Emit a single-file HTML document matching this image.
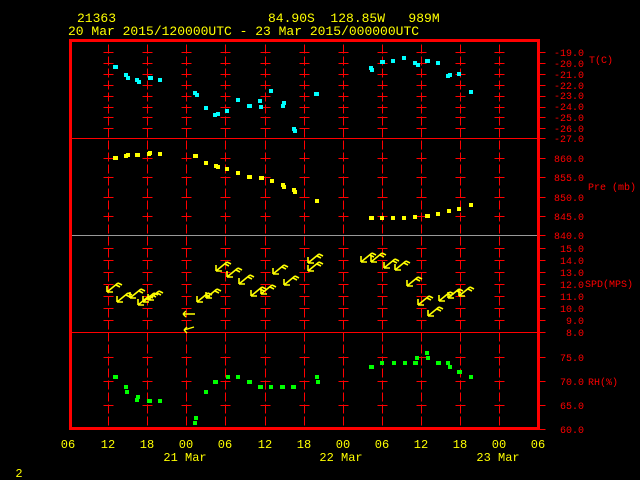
<!DOCTYPE html>
<html><head><meta charset="utf-8"><style>
html,body{margin:0;padding:0;background:#000;width:640px;height:480px;overflow:hidden}
svg{display:block}
text{font-family:"Liberation Mono",monospace}
</style></head><body>
<svg width="640" height="480" viewBox="0 0 640 480" xmlns="http://www.w3.org/2000/svg">
<defs>
<g id="col" stroke="#f00" stroke-width="1">
<line x1="0" y1="44" x2="0" y2="427" stroke-dasharray="9,3"/>
<path d="M-5 52h10M-5 63h10M-5 74h10M-5 85h10M-5 96h10M-5 107h10M-5 117h10M-5 128h10M-5 158h10M-5 177h10M-5 197h10M-5 216h10M-5 248h10M-5 260h10M-5 272h10M-5 284h10M-5 296h10M-5 308h10M-5 320h10M-5 357h10M-5 381h10M-5 405h10"/>
</g>
<g id="arr" stroke="#ff0" stroke-width="1.6" fill="none">
<path d="M0 0 L11 -9 M0 0 L0 -6 M0 0 L6 0 M11 -9 L15 -7 M9 -7 L13 -5"/>
</g>
</defs>
<rect width="640" height="480" fill="#000"/>
<text x="77" y="22" fill="#ff0" font-size="13">21363</text>
<text x="268" y="22" fill="#ff0" font-size="13" xml:space="preserve">84.90S  128.85W   989M</text>
<text x="68" y="35" fill="#ff0" font-size="13">20 Mar 2015/120000UTC - 23 Mar 2015/000000UTC</text>
<g transform="translate(0.5,0.5)" shape-rendering="crispEdges">
<use href="#col" x="108"/><use href="#col" x="147"/><use href="#col" x="186"/><use href="#col" x="225"/><use href="#col" x="265"/><use href="#col" x="304"/><use href="#col" x="343"/><use href="#col" x="382"/><use href="#col" x="421"/><use href="#col" x="460"/><use href="#col" x="499"/>
<line x1="71" y1="138" x2="538" y2="138" stroke="#f00"/>
<line x1="71" y1="235" x2="538" y2="235" stroke="#999"/>
<line x1="71" y1="332" x2="538" y2="332" stroke="#f00"/>
<path stroke="#f00" d="M538 52h7M538 63h7M538 74h7M538 85h7M538 96h7M538 107h7M538 117h7M538 128h7M538 138h7M538 158h7M538 177h7M538 197h7M538 216h7M538 235h7M538 248h7M538 260h7M538 272h7M538 284h7M538 296h7M538 308h7M538 320h7M538 332h7M538 357h7M538 381h7M538 405h7M538 429h7"/>
</g>
<rect x="70.5" y="40.5" width="468" height="388" fill="none" stroke="#f00" stroke-width="3" shape-rendering="crispEdges"/>
<g fill="#f00" font-size="10" text-anchor="end">
<text x="584" y="56">-19.0</text><text x="584" y="67">-20.0</text><text x="584" y="78">-21.0</text><text x="584" y="89">-22.0</text><text x="584" y="99">-23.0</text><text x="584" y="110">-24.0</text><text x="584" y="121">-25.0</text><text x="584" y="132">-26.0</text><text x="584" y="142">-27.0</text>
<text x="584" y="162">860.0</text><text x="584" y="181">855.0</text><text x="584" y="201">850.0</text><text x="584" y="220">845.0</text><text x="584" y="239">840.0</text>
<text x="584" y="252">15.0</text><text x="584" y="264">14.0</text><text x="584" y="276">13.0</text><text x="584" y="288">12.0</text><text x="584" y="300">11.0</text><text x="584" y="312">10.0</text><text x="584" y="324">9.0</text><text x="584" y="336">8.0</text>
<text x="584" y="361">75.0</text><text x="584" y="385">70.0</text><text x="584" y="409">65.0</text><text x="584" y="433">60.0</text>
</g>
<g fill="#f00" font-size="10">
<text x="589" y="63">T(C)</text><text x="588" y="190">Pre (mb)</text><text x="585" y="287">SPD(MPS)</text><text x="588" y="385">RH(%)</text>
</g>
<g fill="#0ff" shape-rendering="crispEdges">
<rect x="113" y="65" width="5" height="4"/><rect x="124" y="73" width="4" height="4"/><rect x="126" y="76" width="4" height="4"/><rect x="135" y="78" width="4" height="4"/><rect x="137" y="80" width="4" height="4"/><rect x="148" y="76" width="5" height="4"/><rect x="158" y="78" width="4" height="4"/><rect x="193" y="91" width="4" height="4"/><rect x="195" y="93" width="4" height="4"/><rect x="204" y="106" width="4" height="4"/><rect x="213" y="113" width="4" height="4"/><rect x="216" y="112" width="4" height="4"/><rect x="225" y="109" width="4" height="4"/><rect x="236" y="98" width="4" height="4"/><rect x="247" y="104" width="5" height="4"/><rect x="258" y="99" width="4" height="4"/><rect x="259" y="105" width="4" height="4"/><rect x="269" y="89" width="4" height="4"/><rect x="281" y="104" width="4" height="4"/><rect x="282" y="101" width="4" height="4"/><rect x="292" y="127" width="4" height="4"/><rect x="293" y="129" width="4" height="4"/><rect x="314" y="92" width="5" height="4"/>
<rect x="369" y="66" width="4" height="4"/><rect x="370" y="68" width="4" height="4"/><rect x="380" y="60" width="5" height="4"/><rect x="391" y="59" width="4" height="4"/><rect x="402" y="56" width="4" height="4"/><rect x="413" y="61" width="4" height="4"/><rect x="416" y="63" width="4" height="4"/><rect x="425" y="59" width="5" height="4"/><rect x="436" y="61" width="4" height="4"/><rect x="446" y="74" width="4" height="4"/><rect x="448" y="73" width="4" height="4"/><rect x="457" y="72" width="4" height="4"/><rect x="469" y="90" width="4" height="4"/>
</g>
<g fill="#ff0" shape-rendering="crispEdges">
<rect x="113" y="156" width="5" height="4"/><rect x="124" y="154" width="4" height="4"/><rect x="126" y="153" width="4" height="4"/><rect x="135" y="153" width="5" height="4"/><rect x="147" y="152" width="4" height="4"/><rect x="148" y="151" width="4" height="4"/><rect x="158" y="152" width="4" height="4"/><rect x="193" y="154" width="5" height="4"/><rect x="204" y="161" width="4" height="4"/><rect x="214" y="164" width="4" height="4"/><rect x="216" y="165" width="4" height="4"/><rect x="225" y="167" width="4" height="4"/><rect x="236" y="171" width="4" height="4"/><rect x="247" y="175" width="5" height="4"/><rect x="259" y="176" width="5" height="4"/><rect x="270" y="179" width="4" height="4"/><rect x="281" y="183" width="4" height="4"/><rect x="282" y="185" width="4" height="4"/><rect x="292" y="188" width="4" height="4"/><rect x="293" y="190" width="4" height="4"/><rect x="315" y="199" width="4" height="4"/>
<rect x="369" y="216" width="5" height="4"/><rect x="380" y="216" width="4" height="4"/><rect x="391" y="216" width="4" height="4"/><rect x="402" y="216" width="4" height="4"/><rect x="413" y="215" width="4" height="4"/><rect x="425" y="214" width="5" height="4"/><rect x="436" y="212" width="4" height="4"/><rect x="447" y="209" width="4" height="4"/><rect x="457" y="207" width="4" height="4"/><rect x="469" y="203" width="4" height="4"/>
</g>
<g>
<use href="#arr" x="107" y="292"/><use href="#arr" x="117" y="302"/><use href="#arr" x="130" y="298"/><use href="#arr" x="138" y="305"/><use href="#arr" x="143" y="302"/><use href="#arr" x="148" y="300"/>
<use href="#arr" x="197" y="302"/><use href="#arr" x="206" y="298"/>
<use href="#arr" x="216" y="271"/><use href="#arr" x="227" y="277"/><use href="#arr" x="239" y="284"/><use href="#arr" x="251" y="296"/><use href="#arr" x="261" y="294"/><use href="#arr" x="273" y="274"/><use href="#arr" x="284" y="285"/><use href="#arr" x="308" y="263"/><use href="#arr" x="308" y="271"/>
<use href="#arr" x="361" y="262"/><use href="#arr" x="371" y="262"/><use href="#arr" x="384" y="268"/><use href="#arr" x="395" y="270"/><use href="#arr" x="407" y="286"/><use href="#arr" x="418" y="305"/><use href="#arr" x="428" y="316"/><use href="#arr" x="439" y="301"/><use href="#arr" x="448" y="298"/><use href="#arr" x="459" y="296"/>
<path stroke="#ff0" stroke-width="1.4" fill="none" d="M183 314h12M183 314l3 -3M183 314l3 3M184 330l10 -3M184 330l3 -3M184 330l3 3"/>
</g>
<g fill="#0f0" shape-rendering="crispEdges">
<rect x="113" y="375" width="5" height="4"/><rect x="124" y="385" width="4" height="4"/><rect x="125" y="390" width="4" height="4"/><rect x="135" y="398" width="4" height="4"/><rect x="136" y="395" width="4" height="4"/><rect x="147" y="399" width="5" height="4"/><rect x="158" y="399" width="4" height="4"/><rect x="194" y="416" width="4" height="4"/><rect x="193" y="421" width="4" height="4"/><rect x="204" y="390" width="4" height="4"/><rect x="213" y="380" width="5" height="4"/><rect x="226" y="375" width="4" height="4"/><rect x="236" y="375" width="4" height="4"/><rect x="247" y="380" width="5" height="4"/><rect x="258" y="385" width="5" height="4"/><rect x="269" y="385" width="4" height="4"/><rect x="280" y="385" width="5" height="4"/><rect x="291" y="385" width="5" height="4"/><rect x="315" y="375" width="4" height="4"/><rect x="316" y="380" width="4" height="4"/>
<rect x="369" y="365" width="5" height="4"/><rect x="380" y="361" width="4" height="4"/><rect x="392" y="361" width="4" height="4"/><rect x="403" y="361" width="4" height="4"/><rect x="413" y="361" width="5" height="4"/><rect x="415" y="356" width="4" height="4"/><rect x="425" y="351" width="4" height="4"/><rect x="426" y="356" width="4" height="4"/><rect x="436" y="361" width="5" height="4"/><rect x="446" y="361" width="4" height="4"/><rect x="448" y="365" width="4" height="4"/><rect x="457" y="370" width="5" height="4"/><rect x="469" y="375" width="4" height="4"/>
</g>
<g fill="#ff0" font-size="12" text-anchor="middle">
<text x="68" y="448">06</text><text x="108" y="448">12</text><text x="147" y="448">18</text><text x="186" y="448">00</text><text x="225" y="448">06</text><text x="265" y="448">12</text><text x="304" y="448">18</text><text x="343" y="448">00</text><text x="382" y="448">06</text><text x="421" y="448">12</text><text x="460" y="448">18</text><text x="499" y="448">00</text><text x="538" y="448">06</text>
<text x="185" y="461">21 Mar</text><text x="341" y="461">22 Mar</text><text x="498" y="461">23 Mar</text>
<text x="19" y="477">2</text>
</g>
</svg>
</body></html>
